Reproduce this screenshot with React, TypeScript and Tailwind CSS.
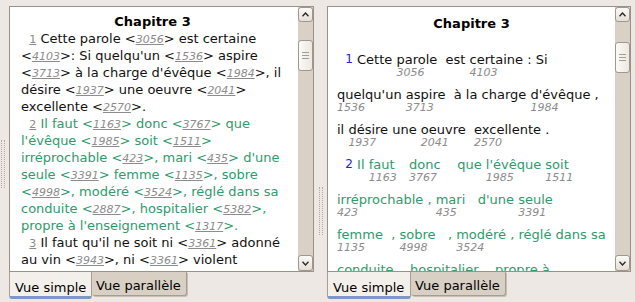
type Seg = string | { s: string } | { v: string };
type Line = { green?: boolean; segs: Seg[] };

const leftLines: Line[] = [
  { segs: ['  ', { v: '1' }, ' Cette parole ', { s: '3056' }, ' est certaine'] },
  { segs: [{ s: '4103' }, ": Si quelqu'un ", { s: '1536' }, ' aspire'] },
  { segs: [{ s: '3713' }, " à la charge d'évêque ", { s: '1984' }, ', il'] },
  { segs: ['désire ', { s: '1937' }, ' une oeuvre ', { s: '2041' }] },
  { segs: ['excellente ', { s: '2570' }, '.'] },
  { green: true, segs: ['  ', { v: '2' }, ' Il faut ', { s: '1163' }, ' donc ', { s: '3767' }, ' que'] },
  { green: true, segs: ["l'évêque ", { s: '1985' }, ' soit ', { s: '1511' }] },
  { green: true, segs: ['irréprochable ', { s: '423' }, ', mari ', { s: '435' }, " d'une"] },
  { green: true, segs: ['seule ', { s: '3391' }, ' femme ', { s: '1135' }, ', sobre'] },
  { green: true, segs: [{ s: '4998' }, ', modéré ', { s: '3524' }, ', réglé dans sa'] },
  { green: true, segs: ['conduite ', { s: '2887' }, ', hospitalier ', { s: '5382' }, ','] },
  { green: true, segs: ["propre à l'enseignement ", { s: '1317' }, '.'] },
  { segs: ['  ', { v: '3' }, " Il faut qu'il ne soit ni ", { s: '3361' }, ' adonné'] },
  { segs: ['au vin ', { s: '3943' }, ', ni ', { s: '3361' }, ' violent'] },
];

// interlinear rows: word, strong number under it, spaces after
type Tok = { w: string; n?: string; sp?: string; v?: boolean };
type Row = { green?: boolean; toks: Tok[] };

const rightRows: Row[] = [
  {
    toks: [
      { w: '1', v: true, sp: ' ' },
      { w: 'Cette', sp: ' ' },
      { w: 'parole', n: '3056', sp: '  ' },
      { w: 'est', sp: ' ' },
      { w: 'certaine', n: '4103', sp: ' ' },
      { w: ':', sp: ' ' },
      { w: 'Si' },
    ],
  },
  {
    toks: [
      { w: "quelqu'un", n: '1536', sp: ' ' },
      { w: 'aspire', n: '3713', sp: '  ' },
      { w: 'à', sp: ' ' },
      { w: 'la', sp: ' ' },
      { w: 'charge', sp: ' ' },
      { w: "d'évêque", n: '1984', sp: ' ' },
      { w: ',' },
    ],
  },
  {
    toks: [
      { w: 'il', sp: ' ' },
      { w: 'désire', n: '1937', sp: ' ' },
      { w: 'une', sp: ' ' },
      { w: 'oeuvre', n: '2041', sp: '  ' },
      { w: 'excellente', n: '2570', sp: ' ' },
      { w: '.' },
    ],
  },
  {
    green: true,
    toks: [
      { w: '2', v: true, sp: ' ' },
      { w: 'Il', sp: ' ' },
      { w: 'faut', n: '1163', sp: '   ' },
      { w: 'donc', n: '3767', sp: '    ' },
      { w: 'que', sp: ' ' },
      { w: "l'évêque", n: '1985', sp: ' ' },
      { w: 'soit', n: '1511' },
    ],
  },
  {
    green: true,
    toks: [
      { w: 'irréprochable', n: '423', sp: ' ' },
      { w: ',', sp: ' ' },
      { w: 'mari', n: '435', sp: '   ' },
      { w: "d'une", sp: ' ' },
      { w: 'seule', n: '3391' },
    ],
  },
  {
    green: true,
    toks: [
      { w: 'femme', n: '1135', sp: '  ' },
      { w: ',', sp: ' ' },
      { w: 'sobre', n: '4998', sp: '   ' },
      { w: ',', sp: ' ' },
      { w: 'modéré', n: '3524', sp: ' ' },
      { w: ',', sp: ' ' },
      { w: 'réglé', sp: ' ' },
      { w: 'dans', sp: ' ' },
      { w: 'sa' },
    ],
  },
  {
    green: true,
    toks: [
      { w: 'conduite', n: '2887', sp: '  ' },
      { w: ',', sp: ' ' },
      { w: 'hospitalier', n: '5382', sp: '  ' },
      { w: ',', sp: ' ' },
      { w: 'propre', sp: ' ' },
      { w: 'à' },
    ],
  },
];

function Caret({ up }: { up?: boolean }) {
  return (
    <svg width="7" height="5" viewBox="0 0 7 5" className={up ? '' : 'rotate-180'}>
      <path d="M0.5 4.2 L3.5 1 L6.5 4.2" fill="none" stroke="#2a2a2a" strokeWidth="1.4" />
    </svg>
  );
}

function Scrollbar({ offset }: { offset: 'left' | 'right' }) {
  return (
    <div className="flex w-[15px] shrink-0 flex-col bg-[#d9d0c6]">
      <div className="flex h-[15px] items-center justify-center rounded-[3px] border border-[#a2978b] bg-gradient-to-b from-[#fbfaf8] to-[#e4ded6]">
        <Caret up />
      </div>
      <div className={offset === 'left' ? 'h-[18px]' : 'h-[20px]'} />
      <div className="flex h-[31px] flex-col items-center justify-center gap-[2px] rounded-[3px] border border-[#a2978b] bg-gradient-to-r from-[#fbfaf8] to-[#ece7e1]">
        <div className="h-px w-[7px] bg-[#a69b8f]" />
        <div className="h-px w-[7px] bg-[#a69b8f]" />
        <div className="h-px w-[7px] bg-[#a69b8f]" />
      </div>
      <div className="flex-1" />
      <div className="flex h-[16px] items-center justify-center rounded-[3px] border border-[#a2978b] bg-gradient-to-b from-[#fbfaf8] to-[#e4ded6]">
        <Caret />
      </div>
    </div>
  );
}

function Tabs({ wide }: { wide?: boolean }) {
  return (
    <div className="flex h-[30px] items-start leading-[17px]">
      <div
        className={`h-[27px] rounded-b-[3px] border-x border-b-[3px] border-x-[#a89d90] border-b-[#7b98c9] bg-[#f3f0ec] pt-[7px] pl-[5px] ${
          wide ? 'w-[84px]' : 'w-[83px]'
        }`}
      >
        Vue simple
      </div>
      <div className="h-[24px] w-[95px] rounded-b-[3px] border-r border-b border-[#a89d90] bg-[#d9d0c5] pt-[5px] pl-[4px] shadow-[1px_1px_0_#c8beb2]">
        Vue parallèle
      </div>
    </div>
  );
}

function Dots({ h }: { h: string }) {
  return (
    <div className={`flex gap-[2px] ${h}`}>
      <div className="w-px border-l border-dotted border-[#b3a899]" />
      <div className="w-px border-l border-dotted border-[#b3a899]" />
    </div>
  );
}

function LeftText() {
  return (
    <div className="flex-1 overflow-hidden pt-[6px] pl-[11px] pr-[14px] text-[13px] leading-[17px]">
      <div className="h-[17px] text-center font-bold text-black">Chapitre 3</div>
      {leftLines.map((line, i) => (
        <div
          key={i}
          className={`h-[17px] whitespace-pre ${line.green ? 'text-[#2f9a6c]' : 'text-[#111]'}`}
        >
          {line.segs.map((seg, j) => {
            if (typeof seg === 'string') return <span key={j}>{seg}</span>;
            if ('v' in seg)
              return (
                <span key={j} className="text-[11px] text-[#8c8c8c] underline decoration-[#8c8c8c]">
                  {seg.v}
                </span>
              );
            return (
              <span key={j}>
                &lt;
                <span className="text-[11px] italic text-[#8c8c8c] underline decoration-[#8c8c8c]">
                  {seg.s}
                </span>
                &gt;
              </span>
            );
          })}
        </div>
      ))}
    </div>
  );
}

function RightText() {
  return (
    <div className="flex-1 overflow-hidden pt-[8px] pl-[9px] pr-[9px] text-[13px]">
      <div className="mb-[19px] h-[17px] text-center font-bold leading-[17px] text-black">Chapitre 3</div>
      {rightRows.map((row, i) => (
        <div
          key={i}
          className={`mb-[8px] h-[27px] whitespace-pre leading-[17px] ${
            row.green ? 'text-[#2f9a6c]' : 'text-[#111]'
          }`}
        >
          {i === 0 || i === 3 ? '  ' : ''}
          {row.toks.map((t, j) => (
            <span key={j}>
              <span className="inline-flex flex-col align-top">
                <span className={`h-[17px] leading-[17px] ${t.v ? 'text-[12px] text-[#2323c8]' : ''}`}>{t.w}</span>
                <span className="h-[10px] text-[11px] italic leading-[10px] text-[#8c8c8c]">{t.n ?? ''}</span>
              </span>
              {t.sp ?? ''}
            </span>
          ))}
        </div>
      ))}
    </div>
  );
}

export default function App() {
  return (
    <div className="flex h-[302px] w-[635px] overflow-hidden bg-[#ede8e3] font-['DejaVu_Sans',sans-serif] text-[13px] text-black">
      <div className="w-[9px] pl-[1px] pt-[140px]">
        <Dots h="h-[48px]" />
      </div>
      <div className="flex w-[305px] flex-col pt-[6px]">
        <div className="flex h-[266px] border border-[#9d9185] bg-white">
          <LeftText />
          <Scrollbar offset="left" />
        </div>
        <Tabs />
      </div>
      <div className="flex w-[13px] justify-center pt-[187px]">
        <Dots h="h-[48px]" />
      </div>
      <div className="flex w-[304px] flex-col pt-[6px]">
        <div className="flex h-[266px] border border-[#9d9185] bg-white">
          <RightText />
          <Scrollbar offset="right" />
        </div>
        <Tabs wide />
      </div>
    </div>
  );
}
